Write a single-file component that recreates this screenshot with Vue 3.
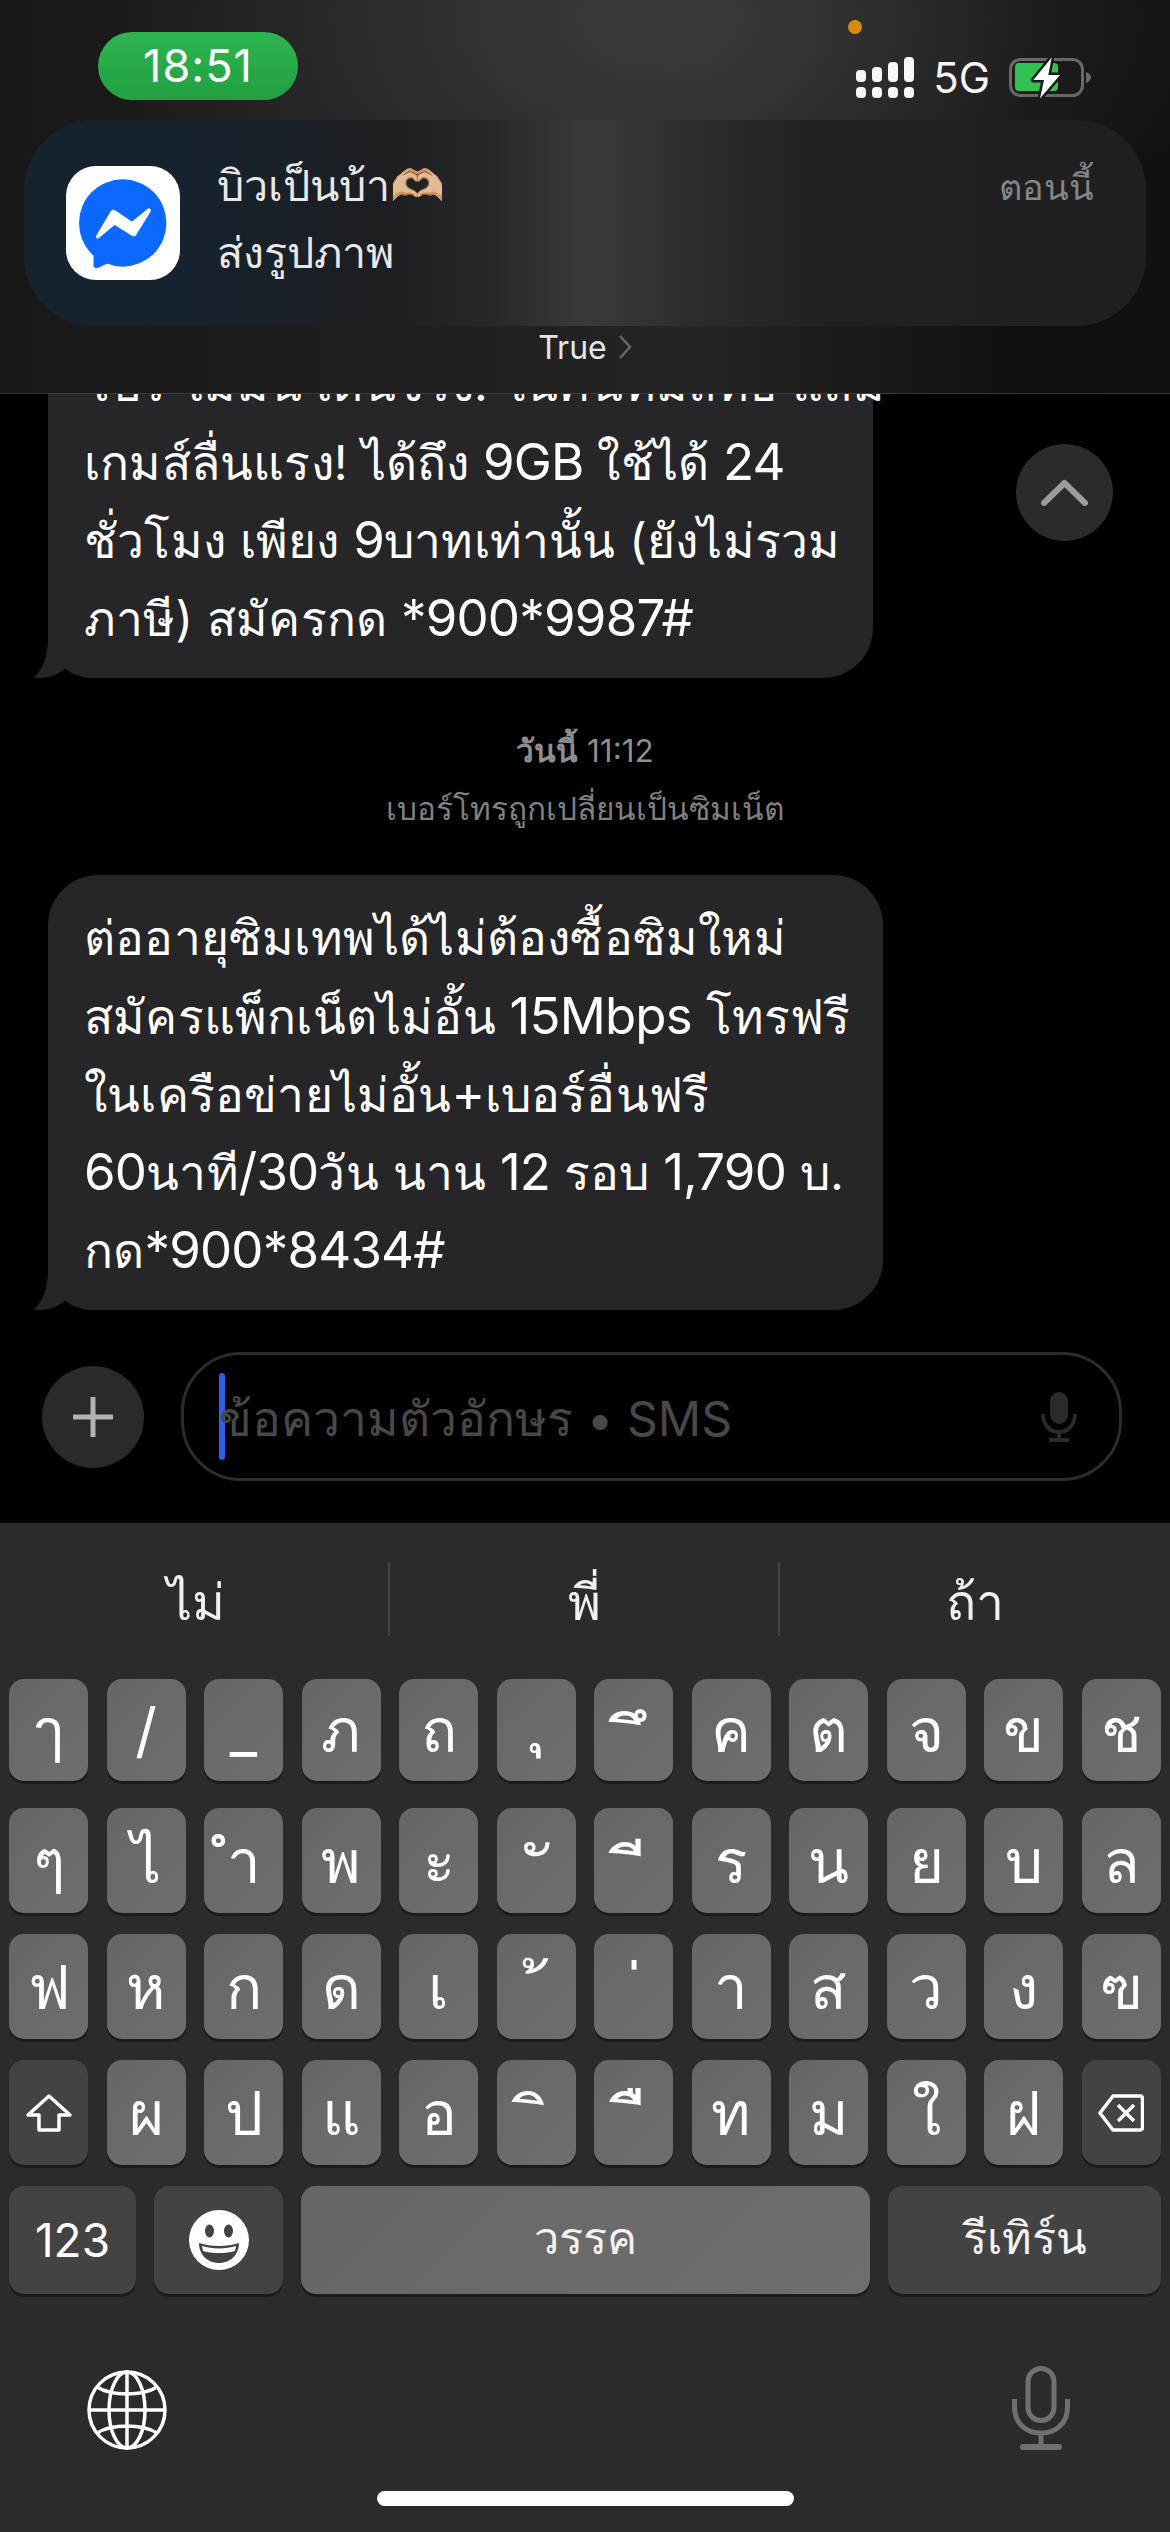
<template>
  <div class="screen">
    <!-- แถบบน + notification -->
    <header class="top">
      <div class="status">
        <div class="clock">18:51</div>
        <span class="dot"></span>
        <div class="status-right">
          <svg width="58" height="41" viewBox="0 0 58 41" fill="#f6f6f6">
            <rect x="0" y="13" width="10" height="12" rx="4" />
            <rect x="16" y="10" width="10" height="15" rx="4" />
            <rect x="32" y="5" width="10" height="20" rx="4" />
            <rect x="48" y="0" width="10" height="25" rx="4" />
            <rect x="0" y="30" width="10" height="11" rx="4" />
            <rect x="16" y="30" width="10" height="11" rx="4" />
            <rect x="32" y="30" width="10" height="11" rx="4" />
            <rect x="48" y="30" width="10" height="11" rx="4" />
          </svg>
          <span class="net">5G</span>
          <svg width="82" height="42" viewBox="0 0 82 42">
            <rect x="1.500" y="2.500" width="72" height="36" rx="10" fill="none" stroke="#686868" stroke-width="3" />
            <rect x="6" y="6" width="43" height="28" rx="4" fill="#30c154" />
            <path d="M77 15c3 1 5 3 5 5.500s-2 4.500-5 5.500z" fill="#686868" />
            <path d="M42.700 .5 24.300 23H35l-4 18.500L51 18H39.300z" fill="#fff" stroke="#1a1a1a" stroke-width="5" stroke-linejoin="round" paint-order="stroke" />
          </svg>
        </div>
      </div>

      <div class="banner">
        <div class="app-icon">
          <svg width="114" height="114" viewBox="0 0 114 114">
            <circle cx="56.700" cy="57" r="43.700" fill="#0b69ff" />
            <path d="M28 88v12c0 1.500 1.800 2.200 3.500 1.500L46 95z" fill="#0b69ff" stroke="#0b69ff" stroke-linejoin="round" />
            <path d="M31 70 45.500 45.500c.8-1.200 2-1.400 3.200-.6L66 56.500 82 43.500c1.200-1 2.800.4 2 1.700L69.500 68.500c-.8 1.200-2 1.400-3.200.6L48.700 58 32.500 71.500c-1 .8-2.200-.2-1.500-1.500z" fill="#fff" stroke="#fff" stroke-width="1.500" stroke-linejoin="round" />
          </svg>
        </div>
        <div class="banner-text">
          <div class="banner-name">บิวเป็นบ้า<span class="emoji">🫶🏼</span></div>
          <div class="banner-msg">ส่งรูปภาพ</div>
        </div>
        <div class="banner-time">ตอนนี้</div>
      </div>

      <div class="true-row">
        <span>True</span>
        <svg width="14" height="24" viewBox="0 0 14 24">
          <path d="M2 1l10 11L2 23" fill="none" stroke="#666" stroke-width="2.500" />
        </svg>
      </div>
    </header>

    <!-- ข้อความ -->
    <main class="chat">
      <div class="bubble first">
        <div v-for="(line, i) in firstMsg" :key="i" class="msg-line">
          <span v-for="(part, j) in line" :key="j" :class="{ lat: part.lat }">{{ part.text }}</span>
        </div>
        <svg class="tail" width="42" height="48" viewBox="0 0 42 48">
          <path d="M15 0v8C15 25 10 40 0 48c12 1 24-2 33-10l9-18L30 0z" fill="#262628" />
        </svg>
      </div>

      <button class="up-btn">
        <svg width="47" height="27" viewBox="0 0 47 27">
          <path d="M3 24 23.500 4 44 24" fill="none" stroke="#9c9c9c" stroke-width="6" stroke-linecap="round" stroke-linejoin="round" />
        </svg>
      </button>

      <div class="stamp">
        <div class="stamp-time"><b>วันนี้</b> 11:12</div>
        <div class="stamp-note">เบอร์โทรถูกเปลี่ยนเป็นซิมเน็ต</div>
      </div>

      <div class="bubble second">
        <div v-for="(line, i) in secondMsg" :key="i" class="msg-line">
          <span v-for="(part, j) in line" :key="j" :class="{ lat: part.lat }">{{ part.text }}</span>
        </div>
        <svg class="tail" width="42" height="48" viewBox="0 0 42 48">
          <path d="M15 0v8C15 25 10 40 0 48c12 1 24-2 33-10l9-18L30 0z" fill="#262628" />
        </svg>
      </div>

      <div class="input-row">
        <div class="plus">
          <svg width="40" height="40" viewBox="0 0 40 40">
            <path d="M20 1v38M1 20h38" stroke="#b2b2b2" stroke-width="5" stroke-linecap="round" />
          </svg>
        </div>
        <div class="field">
          <span class="caret"></span>
          <span class="placeholder">ข้อความตัวอักษร • SMS</span>
          <svg class="field-mic" width="36" height="50" viewBox="0 0 36 50">
            <rect x="9" y="0" width="18" height="32" rx="9" fill="#2a2a2a" />
            <path d="M2 22c0 11 7 18 16 18s16-7 16-18M18 40v8M8 48h20" fill="none" stroke="#2a2a2a" stroke-width="4" />
          </svg>
        </div>
      </div>
    </main>

    <!-- คีย์บอร์ด -->
    <section class="keyboard">
      <div class="suggest">
        <span v-for="word in suggestions" :key="word" class="word">{{ word }}</span>
      </div>

      <div v-for="(row, i) in keyRows" :key="i" class="row" :class="'row-' + i">
        <div v-for="k in row" :key="k.id" class="key" :class="[k.pos, { dark: k.icon }]">
          <svg v-if="k.icon === 'shift'" width="46" height="38" viewBox="0 0 46 38">
            <path d="M23 2 2 21h11v15h20V21h11z" fill="none" stroke="#fff" stroke-width="3.500" stroke-linejoin="round" />
          </svg>
          <svg v-else-if="k.icon === 'back'" width="46" height="38" viewBox="0 0 46 38">
            <path d="M15 2h27c1.500 0 2.500 1 2.500 2.500v29c0 1.500-1 2.500-2.500 2.500H15L2 19z" fill="none" stroke="#fff" stroke-width="3.500" stroke-linejoin="round" />
            <path d="M20 11l16 16M36 11 20 27" stroke="#fff" stroke-width="3.500" />
          </svg>
          <template v-else>{{ k.label }}</template>
        </div>
      </div>

      <div class="row row-last">
        <div class="key dark small-num">123</div>
        <div class="key dark">
          <svg width="60" height="60" viewBox="0 0 60 60">
            <circle cx="30" cy="30" r="30" fill="#fff" />
            <ellipse cx="20.500" cy="21" rx="4.500" ry="6.500" fill="#434343" />
            <ellipse cx="39.500" cy="21" rx="4.500" ry="6.500" fill="#434343" />
            <path d="M10 33c6 2 13 3 20 3s14-1 20-3c0 11-8 20-20 20S10 44 10 33z" fill="#434343" />
            <path d="M13 36c5 1.500 11 2.500 17 2.500S42 37.500 47 36l-1 5c-5 1.500-10 2-16 2s-11-.5-16-2z" fill="#fff" />
          </svg>
        </div>
        <div class="key small-th">วรรค</div>
        <div class="key dark small-th">รีเทิร์น</div>
      </div>

      <div class="kb-bottom">
        <svg width="80" height="80" viewBox="0 0 80 80" fill="none" stroke="#fff" stroke-width="3.500">
          <circle cx="40" cy="40" r="38" />
          <ellipse cx="40" cy="40" rx="18" ry="38" />
          <path d="M40 2v76M2 40h76M10 17c8 5 18 7 30 7s22-2 30-7M10 63c8-5 18-7 30-7s22 2 30 7" />
        </svg>
        <svg width="58" height="84" viewBox="0 0 58 84" fill="none" stroke="#707070" stroke-width="5">
          <rect x="16" y="2.500" width="26" height="52" rx="13" />
          <path d="M2.500 33v8c0 16 11 26 26.500 26s26.500-10 26.500-26v-8" />
          <path d="M29 67v13" />
          <path d="M11 81h36" stroke-width="6" stroke-linecap="round" />
        </svg>
      </div>
      <div class="home-bar"></div>
    </section>
  </div>
</template>

<script setup>
// ตัวเลข/ละตินใช้ขนาดใหญ่กว่าไทยเล็กน้อย
function splitLine(line) {
  return line
    .split(/([0-9A-Za-z*#,/+]+)/)
    .filter(Boolean)
    .map((text) => ({ text, lat: /^[0-9A-Za-z*#,/+]+$/.test(text) }))
}

const firstMsg = [
  'โปร ไม่มีนี เด่นจริง. ในคืนที่มีสิทธิ แถม',
  'เกมส์ลื่นแรง! ได้ถึง 9GB ใช้ได้ 24',
  'ชั่วโมง เพียง 9บาทเท่านั้น (ยังไม่รวม',
  'ภาษี) สมัครกด *900*9987#'
].map(splitLine)

const secondMsg = [
  'ต่ออายุซิมเทพได้ไม่ต้องซื้อซิมใหม่',
  'สมัครแพ็กเน็ตไม่อั้น 15Mbps โทรฟรี',
  'ในเครือข่ายไม่อั้น+เบอร์อื่นฟรี',
  '60นาที/30วัน นาน 12 รอบ 1,790 บ.',
  'กด*900*8434#'
].map(splitLine)

const suggestions = ['ไม่', 'พี่', 'ถ้า']

// สระบน/ล่างจัดตำแหน่งแยก
const mark = { 'ุ': 'low', 'ึ': 'high', 'ั': 'high', 'ี': 'high', '้': 'tone', '่': 'tone', 'ิ': 'high-sm', 'ื': 'high-sm' }

function toRow(chars, r) {
  return chars.map((c, i) => {
    if (c === 'shift' || c === 'back') return { id: r + '-' + i, icon: c }
    return { id: r + '-' + i, label: mark[c] ? '\u00a0' + c : c, pos: mark[c] }
  })
}

const keyRows = [
  toRow(['ๅ', '/', '_', 'ภ', 'ถ', 'ุ', 'ึ', 'ค', 'ต', 'จ', 'ข', 'ช'], 0),
  toRow(['ๆ', 'ไ', 'ำ', 'พ', 'ะ', 'ั', 'ี', 'ร', 'น', 'ย', 'บ', 'ล'], 1),
  toRow(['ฟ', 'ห', 'ก', 'ด', 'เ', '้', '่', 'า', 'ส', 'ว', 'ง', 'ฃ'], 2),
  toRow(['shift', 'ผ', 'ป', 'แ', 'อ', 'ิ', 'ื', 'ท', 'ม', 'ใ', 'ฝ', 'back'], 3)
]
</script>

<style>
html, body {
  margin: 0;
  background: #000;
}
</style>

<style scoped>
.screen {
  width: 1170px;
  height: 2532px;
  display: flex;
  flex-direction: column;
  overflow: hidden;
  background: #000;
  color: #fff;
  font-family: Inter, "Noto Sans", sans-serif;
}

.top {
  position: relative;
  z-index: 2;
  box-sizing: border-box;
  height: 394px;
  flex: none;
  border-bottom: 1px solid #3a3a3a;
  background:
    radial-gradient(ellipse 560px 320px at 660px 20px, #3a3a3a, rgba(58, 58, 58, 0) 100%),
    linear-gradient(90deg, #181818, #242424 60%, #0f0f0f 88%, #111);
}

.status {
  position: relative;
  height: 120px;
  display: flex;
}

.clock {
  width: 200px;
  height: 68px;
  margin: 32px 0 0 98px;
  border-radius: 34px;
  background: linear-gradient(#2eb551, #229f41);
  font-size: 45px;
  letter-spacing: 1px;
  line-height: 68px;
  text-align: center;
}

.dot {
  position: absolute;
  left: 848px;
  top: 20px;
  width: 14px;
  height: 14px;
  border-radius: 50%;
  background: #d98a10;
}

.status-right {
  display: flex;
  align-items: center;
  gap: 19px;
  height: 41px;
  margin: 57px 0 0 auto;
  padding-right: 79px;
}

.net {
  font-size: 42px;
  line-height: 41px;
  color: #f6f6f6;
}

.banner {
  display: flex;
  box-sizing: border-box;
  height: 206px;
  margin: 0 24px;
  padding: 46px 52px 0 42px;
  border-radius: 70px;
  background: linear-gradient(90deg, #16232f 0%, #17222e 15%, #1c1e21 32%, #28282a 42%, #3a3a3d 50%, #2c2c2e 60%, #222224 70%, #1f1f21 100%);
}

.app-icon {
  width: 114px;
  height: 114px;
  flex: none;
  border-radius: 30px;
  background: #fff;
}

.banner-text {
  margin-left: 37px;
  color: #e8e8e8;
}

.banner-name {
  font-size: 43px;
  font-weight: 500;
  line-height: 56px;
  margin-top: -9px;
}

.emoji {
  font-size: 44px;
}

.banner-msg {
  font-size: 43px;
  line-height: 56px;
  margin-top: 11px;
}

.banner-time {
  margin-left: auto;
  margin-top: -7px;
  font-size: 36px;
  line-height: 56px;
  color: #858585;
}

.true-row {
  display: flex;
  align-items: center;
  justify-content: center;
  gap: 11px;
  height: 42px;
  font-size: 32px;
  color: #e6e6e6;
}

.chat {
  position: relative;
  box-sizing: border-box;
  height: 1129px;
  flex: none;
  overflow: hidden;
}

.bubble {
  position: relative;
  box-sizing: border-box;
  margin-left: 48px;
  padding: 24px 0 21px 36px;
  border-radius: 50px 50px 50px 44px;
  background: #262628;
}

.first {
  width: 825px;
  margin-top: -73px;
}

.second {
  width: 835px;
}

.msg-line {
  height: 78px;
  font-size: 48px;
  letter-spacing: 0.200px;
  line-height: 78px;
  white-space: nowrap;
}

.lat {
  font-size: 51px;
  letter-spacing: -0.800px;
}

.tail {
  position: absolute;
  left: -15px;
  bottom: 0;
}

.up-btn {
  position: absolute;
  left: 1016px;
  top: 50px;
  width: 97px;
  height: 97px;
  padding: 0;
  border: none;
  border-radius: 50%;
  background: #2b2b2d;
  display: flex;
  align-items: center;
  justify-content: center;
}

.stamp {
  margin-top: 44px;
  text-align: center;
  line-height: 58px;
  font-size: 31.500px;
}

.stamp-time {
  color: #8e8e8e;
}

.stamp-time b {
  font-weight: 600;
}

.stamp-note {
  color: #808080;
}

.stamp + .bubble {
  margin-top: 37px;
}

.input-row {
  display: flex;
  align-items: center;
  margin: 42px 48px 0 42px;
  gap: 37px;
}

.plus {
  width: 102px;
  height: 102px;
  flex: none;
  border-radius: 50%;
  background: #2a2a2c;
  display: flex;
  align-items: center;
  justify-content: center;
}

.field {
  box-sizing: border-box;
  flex: 1;
  height: 129px;
  padding: 0 36px 0 35px;
  border: 3px solid #2c2c2e;
  border-radius: 60px;
  display: flex;
  align-items: center;
}

.caret {
  width: 6px;
  height: 87px;
  flex: none;
  border-radius: 3px;
  background: #2f5fe8;
}

.placeholder {
  margin: 5px 0 0 -6px;
  font-size: 48px;
  color: #48484a;
  white-space: nowrap;
}

.field-mic {
  margin-left: auto;
  margin-right: 6px;
}

.keyboard {
  flex: 1;
  background: #2b2b2b;
}

.suggest {
  height: 156px;
  display: grid;
  grid-template-columns: 388px 390px 1fr;
  box-sizing: border-box;
  padding-top: 39px;
}

.word {
  height: 74px;
  font-size: 50px;
  line-height: 80px;
  text-align: center;
  color: #f0f0f0;
  border-left: 2px solid #434343;
}

.word:first-child {
  border-left: none;
  padding-left: 4px;
}

.row {
  display: grid;
  grid-template-columns: repeat(12, 79px);
  column-gap: 18.500px;
  padding: 0 9px;
  margin-bottom: 21px;
}

.row-0 {
  margin-bottom: 27px;
}

.key {
  box-sizing: border-box;
  height: 105px;
  border-radius: 15px;
  background: linear-gradient(135deg, #666, #6e6e6e);
  box-shadow: 0 3px 0 #1b1b1b;
  display: flex;
  align-items: center;
  justify-content: center;
  font-size: 60px;
  line-height: 1;
  color: #fff;
}

.row-0 .key {
  height: 102px;
}

.key.dark {
  background: #434343;
}

/* ตำแหน่งสระลอยบนคีย์ */
.key.high,
.key.high-sm,
.key.low,
.key.tone {
  font-size: 70px;
}

.key.high {
  padding: 24px 0 0 8px;
}

.key.high-sm {
  padding: 18px 0 0 8px;
}

.key.low {
  padding-bottom: 30px;
}

.key.tone {
  padding-top: 40px;
}

.row-last {
  grid-template-columns: 127px 129px 1fr 273px;
  column-gap: 18px;
  margin-bottom: 0;
}

.row-last .key {
  height: 108px;
}

.small-num {
  font-size: 46px;
}

.small-th {
  font-size: 45px;
  padding-bottom: 6px;
  color: #f2f2f2;
}

.kb-bottom {
  display: flex;
  align-items: flex-end;
  justify-content: space-between;
  padding: 72px 100px 0 87px;
}

.home-bar {
  width: 417px;
  height: 15px;
  margin: 41px auto 0;
  border-radius: 8px;
  background: #fff;
}
</style>
